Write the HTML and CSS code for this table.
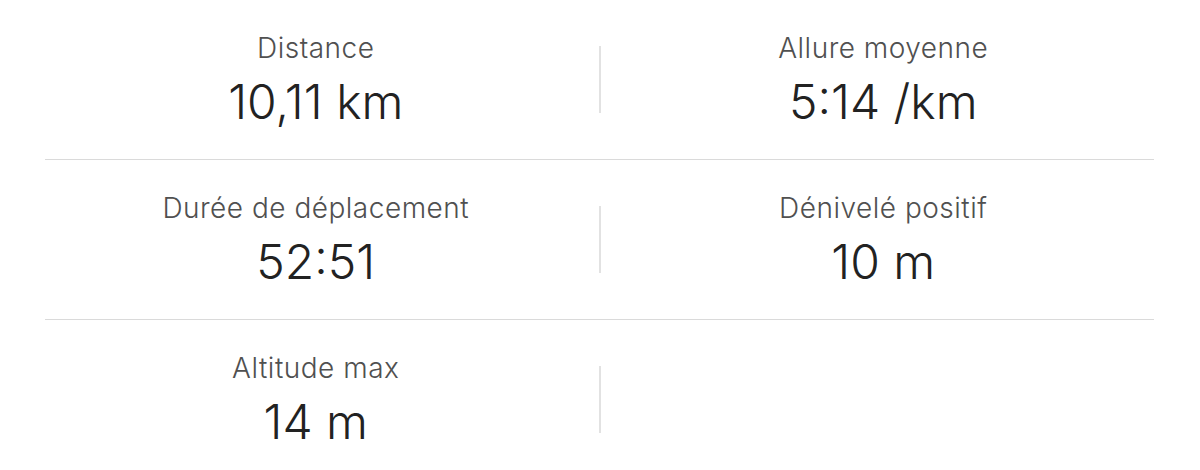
FILE: index.html
```html
<!DOCTYPE html>
<html lang="fr">
<head>
<meta charset="utf-8">
<link rel="stylesheet" href="styles.css">
</head>
<body>
<div class="stats">
  <div class="row">
    <div class="stat"><div class="label">Distance</div><div class="value">10,11 km</div></div>
    <div class="vline"></div>
    <div class="stat"><div class="label">Allure moyenne</div><div class="value">5:14 /km</div></div>
  </div>
  <div class="hline"></div>
  <div class="row">
    <div class="stat"><div class="label">Durée de déplacement</div><div class="value">52:51</div></div>
    <div class="vline"></div>
    <div class="stat"><div class="label">Dénivelé positif</div><div class="value">10 m</div></div>
  </div>
  <div class="hline"></div>
  <div class="row">
    <div class="stat"><div class="label">Altitude max</div><div class="value">14 m</div></div>
    <div class="vline"></div>
    <div class="stat"></div>
  </div>
</div>
</body>
</html>
```
FILE: styles.css
```css
html, body {
  margin: 0;
  padding: 0;
  background: #fff;
}
body {
  font-family: Inter, "Noto Sans", sans-serif;
  width: 1200px;
  height: 470px;
  overflow: hidden;
}
.stats {
  padding: 0 34px 0 33px;
}
.row {
  display: grid;
  grid-template-columns: 1fr 2px 1fr;
  align-items: center;
  height: 159px;
}
.hline {
  height: 1px;
  background: #dadada;
  margin: 0 12px;
}
.vline {
  width: 2px;
  height: 67px;
  background: #e2e2e2;
}
.stat {
  display: flex;
  flex-direction: column;
  align-items: center;
  gap: 12px;
}
.label {
  font-size: 28px;
  line-height: 32px;
  font-weight: 350;
  letter-spacing: 0.5px;
  color: #505050;
}
.value {
  font-size: 48px;
  line-height: 52px;
  font-weight: 350;
  color: #222;
}
```
